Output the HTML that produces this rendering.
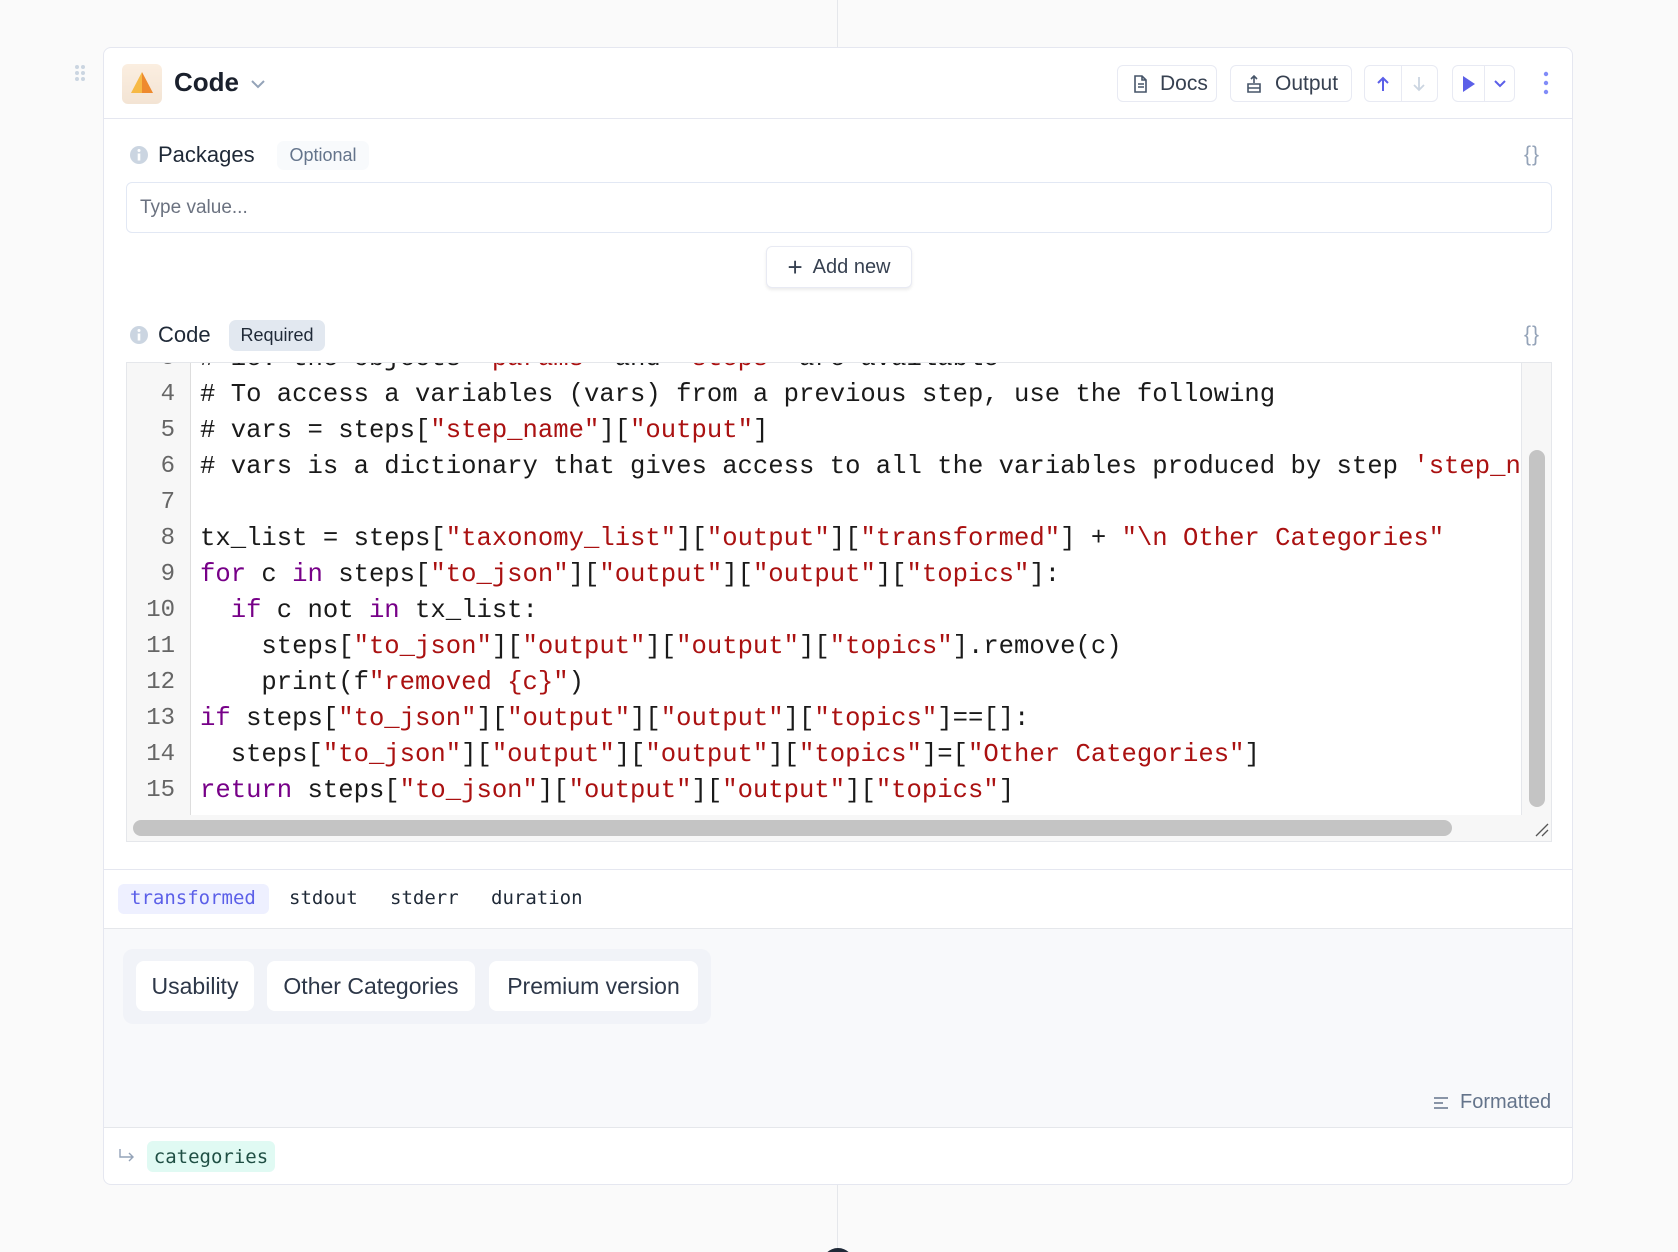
<!DOCTYPE html>
<html style="overflow:hidden;height:1252px"><head><meta charset="utf-8"><style>
*{box-sizing:border-box;margin:0;padding:0}
body{width:1678px;height:1252px;background:#fafafa;font-family:"Liberation Sans",sans-serif;position:relative;overflow:hidden;color:#1f2937}
.a{position:absolute}
.vl{position:absolute;left:837px;width:1px;background:#e5e7eb}
.card{position:absolute;left:103px;top:47px;width:1470px;height:1138px;background:#fff;border:1px solid #e5e7f0;border-radius:8px;overflow:hidden}
.btn{position:absolute;border:1px solid #e8eaf3;border-radius:6px;background:#fff;display:flex;align-items:center;font-size:21px;color:#374151}
.badge{position:absolute;border-radius:7px;font-size:18px;display:flex;align-items:center;justify-content:center}
.ed{position:absolute;left:22px;top:314px;width:1426px;height:480px;border:1px solid #e5e7eb;background:#f7f7f7;overflow:hidden}
.gut{position:absolute;left:0;top:0;width:64px;height:452px;background:#f7f7f7;border-right:1px solid #ddd}
.codebg{position:absolute;left:64px;top:0;width:1331px;height:452px;background:#fff;border-right:1px solid #e5e7eb}
.ln{position:absolute;left:0;width:48px;text-align:right;font-family:"Liberation Mono",monospace;font-size:24px;color:#666;line-height:36px}
.cl{position:absolute;left:73px;font-family:"Liberation Mono",monospace;font-size:25.6px;color:#1a1a1a;white-space:pre;line-height:36px}
.s{color:#a11}.k{color:#708}
.mono{font-family:"DejaVu Sans Mono",monospace}
.chip{position:absolute;top:12px;height:50px;background:#fff;border-radius:8px;font-size:23px;color:#2d3748;display:flex;align-items:center;justify-content:center}
</style></head><body>
<div class="vl" style="top:0;height:47px"></div>
<div class="vl" style="top:1185px;height:67px"></div>
<div class="a" style="left:818px;top:1248px;width:40px;height:4px;overflow:hidden"><div style="margin-left:4px;width:32px;height:32px;border-radius:50%;background:#1f2937"></div></div>
<svg class="a" style="left:74px;top:64px" width="12" height="18"><g fill="#cbd5e1"><circle cx="3" cy="3" r="2"/><circle cx="9" cy="3" r="2"/><circle cx="3" cy="9" r="2"/><circle cx="9" cy="9" r="2"/><circle cx="3" cy="15" r="2"/><circle cx="9" cy="15" r="2"/></g></svg>
<div class="card">
 <div class="a" style="left:0;top:0;width:1470px;height:71px;border-bottom:1px solid #e5e7f0"></div>
 <div class="a" style="left:18px;top:16px;width:40px;height:40px;border-radius:6px;background:linear-gradient(#fbeee0,#f3e4d4)"></div>
 <svg class="a" style="left:23px;top:21px" width="30" height="30"><polygon points="15,3 4,24 15,24" fill="#f6b945"/><polygon points="15,3 26,24 15,24" fill="#ee8a2e"/></svg>
 <div class="a" style="left:70px;top:19px;font-size:26px;font-weight:bold;color:#1a202c">Code</div>
 <svg class="a" style="left:146px;top:30px" width="16" height="12"><path d="M2 3l6 6 6-6" stroke="#94a3b8" stroke-width="2" fill="none"/></svg>
 <div class="btn" style="left:1013px;top:17px;width:100px;height:37px;padding-left:14px"><svg width="16" height="20"><path d="M3 2h7l4 4v12H3z M10 2v4h4 M6 10h6 M6 13h6" stroke="#475569" stroke-width="1.6" fill="none"/></svg><span style="margin-left:12px">Docs</span></div>
 <div class="btn" style="left:1126px;top:17px;width:122px;height:37px;padding-left:14px"><svg width="18" height="20"><path d="M3 10h12v8H3z M3 14h12 M9 2v7 M6 5l3-3 3 3" stroke="#475569" stroke-width="1.6" fill="none"/></svg><span style="margin-left:12px">Output</span></div>
 <div class="btn" style="left:1260px;top:17px;width:74px;height:37px"><div style="width:37px;height:100%;border-right:1px solid #e8eaf3;display:flex;align-items:center;justify-content:center"><svg width="16" height="18"><path d="M8 16V3 M3 8l5-5 5 5" stroke="#5b5fe8" stroke-width="2" fill="none"/></svg></div><div style="width:36px;display:flex;justify-content:center"><svg width="16" height="18"><path d="M8 2v13 M3 10l5 5 5-5" stroke="#cbd5e1" stroke-width="1.8" fill="none"/></svg></div></div>
 <div class="btn" style="left:1348px;top:17px;width:63px;height:37px"><div style="width:33px;height:100%;border-right:1px solid #e8eaf3;display:flex;align-items:center;justify-content:center"><svg width="14" height="18"><polygon points="1,1 13,9 1,17" fill="#5b5fe8"/></svg></div><div style="width:29px;display:flex;justify-content:center"><svg width="14" height="10"><path d="M2 2l5 5 5-5" stroke="#5b5fe8" stroke-width="2" fill="none"/></svg></div></div>
 <svg class="a" style="left:1438px;top:21px" width="8" height="28"><g fill="#818cf8"><circle cx="4" cy="5" r="2.2"/><circle cx="4" cy="14" r="2.2"/><circle cx="4" cy="23" r="2.2"/></g></svg>

 <svg class="a" style="left:25px;top:97px" width="20" height="20"><circle cx="10" cy="10" r="9" fill="#cbd5e1"/><rect x="8.7" y="8.5" width="2.6" height="7" fill="#fff"/><circle cx="10" cy="5.5" r="1.5" fill="#fff"/></svg>
 <div class="a" style="left:54px;top:94px;font-size:22px;color:#1f2937">Packages</div>
 <div class="badge" style="left:173px;top:93px;width:92px;height:29px;background:#f8fafc;color:#64748b">Optional</div>
 <div class="a" style="left:1420px;top:95px;font-size:21px;color:#94a3b8;letter-spacing:1px">{}</div>
 <div class="a" style="left:22px;top:134px;width:1426px;height:51px;border:1px solid #e2e8f4;border-radius:6px;font-size:19px;color:#6b7280;padding:14px 13px">Type value...</div>
 <div class="btn" style="left:662px;top:198px;width:146px;height:42px;justify-content:center;box-shadow:0 2px 3px rgba(0,0,0,.08);font-size:20px"><span style="font-size:26px;margin-right:10px;font-weight:300">+</span>Add new</div>

 <svg class="a" style="left:25px;top:277px" width="20" height="20"><circle cx="10" cy="10" r="9" fill="#cbd5e1"/><rect x="8.7" y="8.5" width="2.6" height="7" fill="#fff"/><circle cx="10" cy="5.5" r="1.5" fill="#fff"/></svg>
 <div class="a" style="left:54px;top:274px;font-size:22px;color:#1f2937">Code</div>
 <div class="badge" style="left:125px;top:272px;width:96px;height:31px;background:#e2e8f0;color:#1f2937">Required</div>
 <div class="a" style="left:1420px;top:275px;font-size:21px;color:#94a3b8;letter-spacing:1px">{}</div>

 <div class="ed">
  <div class="gut"></div><div class="codebg"></div>
  <div class="a" style="left:0;top:0;width:1395px;height:452px;overflow:hidden">
  <div class="ln" style="top:-22px">3</div><div class="cl" style="top:-22px"># ie. the objects <span class="s">"params"</span> and <span class="s">"steps"</span> are available</div>
  <div class="ln" style="top:14px">4</div><div class="cl" style="top:14px"># To access a variables (vars) from a previous step, use the following</div>
  <div class="ln" style="top:50px">5</div><div class="cl" style="top:50px"># vars = steps[<span class="s">"step_name"</span>][<span class="s">"output"</span>]</div>
  <div class="ln" style="top:86px">6</div><div class="cl" style="top:86px"># vars is a dictionary that gives access to all the variables produced by step <span class="s">'step_name'</span></div>
  <div class="ln" style="top:122px">7</div>
  <div class="ln" style="top:158px">8</div><div class="cl" style="top:158px">tx_list = steps[<span class="s">"taxonomy_list"</span>][<span class="s">"output"</span>][<span class="s">"transformed"</span>] + <span class="s">"\n Other Categories"</span></div>
  <div class="ln" style="top:194px">9</div><div class="cl" style="top:194px"><span class="k">for</span> c <span class="k">in</span> steps[<span class="s">"to_json"</span>][<span class="s">"output"</span>][<span class="s">"output"</span>][<span class="s">"topics"</span>]:</div>
  <div class="ln" style="top:230px">10</div><div class="cl" style="top:230px">  <span class="k">if</span> c not <span class="k">in</span> tx_list:</div>
  <div class="ln" style="top:266px">11</div><div class="cl" style="top:266px">    steps[<span class="s">"to_json"</span>][<span class="s">"output"</span>][<span class="s">"output"</span>][<span class="s">"topics"</span>].remove(c)</div>
  <div class="ln" style="top:302px">12</div><div class="cl" style="top:302px">    print(f<span class="s">"removed {c}"</span>)</div>
  <div class="ln" style="top:338px">13</div><div class="cl" style="top:338px"><span class="k">if</span> steps[<span class="s">"to_json"</span>][<span class="s">"output"</span>][<span class="s">"output"</span>][<span class="s">"topics"</span>]==[]:</div>
  <div class="ln" style="top:374px">14</div><div class="cl" style="top:374px">  steps[<span class="s">"to_json"</span>][<span class="s">"output"</span>][<span class="s">"output"</span>][<span class="s">"topics"</span>]=[<span class="s">"Other Categories"</span>]</div>
  <div class="ln" style="top:410px">15</div><div class="cl" style="top:410px"><span class="k">return</span> steps[<span class="s">"to_json"</span>][<span class="s">"output"</span>][<span class="s">"output"</span>][<span class="s">"topics"</span>]</div>
  </div>
  <div class="a" style="left:1402px;top:87px;width:16px;height:357px;border-radius:8px;background:#c4c4c4"></div>
  <div class="a" style="left:6px;top:457px;width:1319px;height:16px;border-radius:8px;background:#c4c4c4"></div>
  <svg class="a" style="left:1407px;top:459px" width="16" height="16"><path d="M2 14L14 2 M8 14l6-6" stroke="#555" stroke-width="1.3"/></svg>
 </div>

 <div class="a" style="left:0;top:821px;width:1470px;height:1px;background:#e5e7f0"></div>
 <div class="a mono" style="left:14px;top:836px;width:151px;height:30px;border-radius:6px;background:#eef0ff"></div>
 <div class="a mono" style="left:26px;top:839px;font-size:19px;color:#5b5fe8">transformed</div>
 <div class="a mono" style="left:185px;top:839px;font-size:19px;color:#1f2937">stdout</div>
 <div class="a mono" style="left:286px;top:839px;font-size:19px;color:#1f2937">stderr</div>
 <div class="a mono" style="left:387px;top:839px;font-size:19px;color:#1f2937">duration</div>
 <div class="a" style="left:0;top:880px;width:1470px;height:200px;background:#f8f9fb;border-top:1px solid #e5e7eb;border-bottom:1px solid #e5e7eb"></div>
 <div class="a" style="left:19px;top:901px;width:588px;height:75px;border-radius:10px;background:#f1f3f8">
  <div class="chip" style="left:13px;width:118px">Usability</div>
  <div class="chip" style="left:144px;width:208px">Other Categories</div>
  <div class="chip" style="left:366px;width:209px">Premium version</div>
 </div>
 <svg class="a" style="left:1329px;top:1048px" width="16" height="14"><path d="M1 2h14 M1 7h9 M1 12h14" stroke="#64748b" stroke-width="1.6"/></svg>
 <div class="a" style="left:1356px;top:1043px;font-size:20px;color:#64748b">Formatted</div>
 <svg class="a" style="left:14px;top:1100px" width="18" height="16"><path d="M2 1v8h13 M11 5l4 4-4 4" stroke="#94a3b8" stroke-width="1.4" fill="none"/></svg>
 <div class="a mono" style="left:43px;top:1093px;width:128px;height:31px;border-radius:6px;background:#e0faf3;color:#1f4f44;font-size:19px;display:flex;align-items:center;justify-content:center">categories</div>
</div>
</body></html>
